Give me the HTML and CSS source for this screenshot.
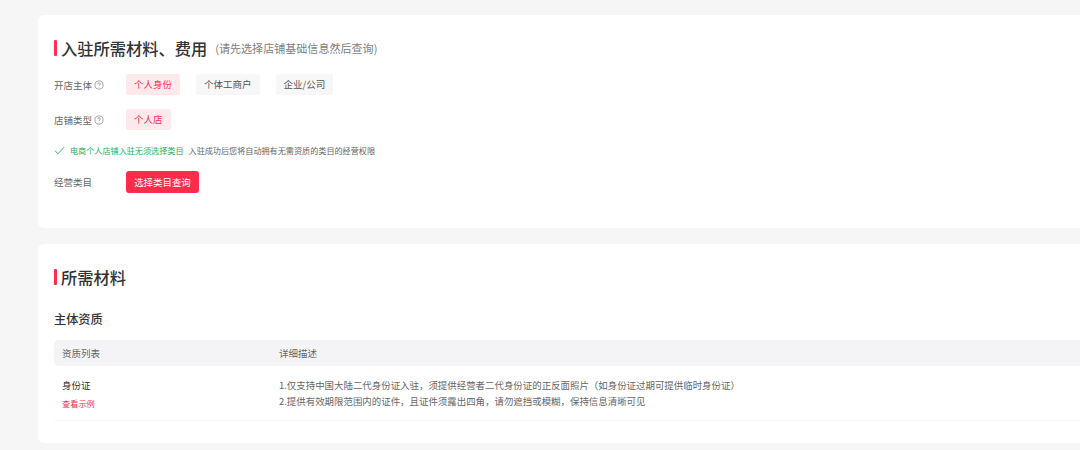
FILE: index.html
```html
<!DOCTYPE html>
<html lang="zh-CN">
<head>
    <meta charset="UTF-8">
    <title>入驻所需材料、费用</title>
    <link rel="stylesheet" href="styles.css">
</head>
<body>
    <div class="main">
        <section class="card card-query">
            <div class="heading">
                <h2 class="title">入驻所需材料、费用</h2>
                <span class="hint">(请先选择店铺基础信息然后查询)</span>
            </div>

            <div class="form-row">
                <div class="label">开店主体
                    <svg class="help" viewBox="0 0 10 10"><circle cx="5" cy="5" r="4.1"/><path d="M3.8 4a1.2 1.2 0 1 1 1.8 1c-.4.3-.6.5-.6 1"/><path d="M5 7.1v.5"/></svg>
                </div>
                <div class="tags">
                    <span class="tag active">个人身份</span>
                    <span class="tag">个体工商户</span>
                    <span class="tag">企业/公司</span>
                </div>
            </div>

            <div class="form-row">
                <div class="label">店铺类型
                    <svg class="help" viewBox="0 0 10 10"><circle cx="5" cy="5" r="4.1"/><path d="M3.8 4a1.2 1.2 0 1 1 1.8 1c-.4.3-.6.5-.6 1"/><path d="M5 7.1v.5"/></svg>
                </div>
                <div class="tags">
                    <span class="tag active">个人店</span>
                </div>
            </div>

            <div class="notice">
                <svg class="check" viewBox="0 0 12 10"><path d="M1 5.2l3.4 3.4L11 1.4"/></svg>
                <span class="notice-ok">电商个人店铺入驻无须选择类目</span>
                <span class="notice-text">入驻成功后您将自动拥有无需资质的类目的经营权限</span>
            </div>

            <div class="form-row">
                <div class="label">经营类目</div>
                <button class="btn">选择类目查询</button>
            </div>
        </section>

        <section class="card card-material">
            <div class="heading">
                <h2 class="title">所需材料</h2>
            </div>
            <h3 class="sub-title">主体资质</h3>

            <div class="table">
                <div class="table-head">
                    <div class="col-name">资质列表</div>
                    <div>详细描述</div>
                </div>
                <div class="table-row">
                    <div class="col-name">
                        <div class="doc-name">身份证</div>
                        <a class="doc-link">查看示例</a>
                    </div>
                    <div class="doc-desc">
                        <p>1.仅支持中国大陆二代身份证入驻，须提供经营者二代身份证的正反面照片（如身份证过期可提供临时身份证）</p>
                        <p>2.提供有效期限范围内的证件，且证件须露出四角，请勿遮挡或模糊，保持信息清晰可见</p>
                    </div>
                </div>
            </div>
        </section>
    </div>
</body>
</html>
```

FILE: styles.css
```css
html, body {
    margin: 0;
    height: 450px;
    overflow: hidden;
}

body {
    background: #f6f6f6;
    font-family: "Noto Sans CJK SC", "Liberation Sans", sans-serif;
    color: #333;
}

.main {
    width: 1100px;
    padding: 15px 0 0 38px;
}

.card {
    background: #fff;
    border-radius: 6px;
    padding: 25px 16px 0;
    box-sizing: border-box;
}

.card-query {
    height: 213px;
    margin-bottom: 16px;
}

.card-material {
    height: 199px;
}

.heading {
    display: flex;
    align-items: center;
    height: 16px;
}

.heading::before {
    content: "";
    width: 3px;
    height: 16px;
    margin-right: 4px;
    background: #ff2e4d;
    border-radius: 1px;
}

.title {
    margin: 0;
    font-size: 16.25px;
    font-weight: 500;
    line-height: 16px;
}

.hint {
    margin-left: 8px;
    font-size: 11.05px;
    color: #808080;
}

.form-row {
    display: flex;
    align-items: center;
    margin-bottom: 14px;
}

.heading + .form-row {
    margin-top: 18px;
}

.label {
    display: flex;
    align-items: center;
    gap: 2px;
    width: 72px;
    font-size: 9.5px;
    color: #666;
}

.help {
    width: 10px;
    height: 10px;
    fill: none;
    stroke: #808080;
    stroke-width: 0.7;
}

.tags {
    display: flex;
    gap: 16px;
}

.tag {
    padding: 0 8px;
    height: 21px;
    line-height: 21px;
    font-size: 9.5px;
    color: #555;
    background: #f7f7f7;
    border-radius: 2px;
}

.tag.active {
    color: #ff2e4d;
    background: #ffe9ed;
}

.notice {
    display: flex;
    align-items: center;
    height: 12px;
    margin: 1px 0 15px;
    font-size: 8.125px;
}

.check {
    width: 11px;
    height: 9px;
    margin-right: 5px;
    fill: none;
    stroke: #2fb36b;
    stroke-width: 1.1;
}

.notice-ok {
    color: #25ae63;
    margin-right: 5px;
}

.notice-text {
    color: #666;
}

.btn {
    width: 73px;
    height: 22px;
    padding: 0;
    border: 0;
    border-radius: 3px;
    background: #ff2b4b;
    color: #fff;
    font-family: inherit;
    font-size: 9.45px;
}

.sub-title {
    margin: 25px 0 12px;
    font-size: 12.2px;
    font-weight: 500;
    line-height: 18px;
}

.table-head {
    display: flex;
    align-items: center;
    height: 26px;
    padding-bottom: 1px;
    box-sizing: border-box;
    background: #f4f4f6;
    border-radius: 5px 0 0 5px;
    font-size: 9.5px;
    color: #666;
}

.col-name {
    width: 225px;
    padding-left: 8px;
    box-sizing: border-box;
}

.table-row {
    display: flex;
    height: 55px;
    border-bottom: 1px solid #f7f7f7;
    box-sizing: border-box;
    padding-top: 11px;
}

.doc-name {
    font-size: 9.5px;
    line-height: 16px;
}

.doc-link {
    display: block;
    margin-top: 4px;
    font-size: 8.2px;
    line-height: 12px;
    color: #ff2e4d;
}

.doc-desc {
    font-size: 9.45px;
    color: #666;
}

.doc-desc p {
    margin: 0;
    line-height: 16px;
}
```
